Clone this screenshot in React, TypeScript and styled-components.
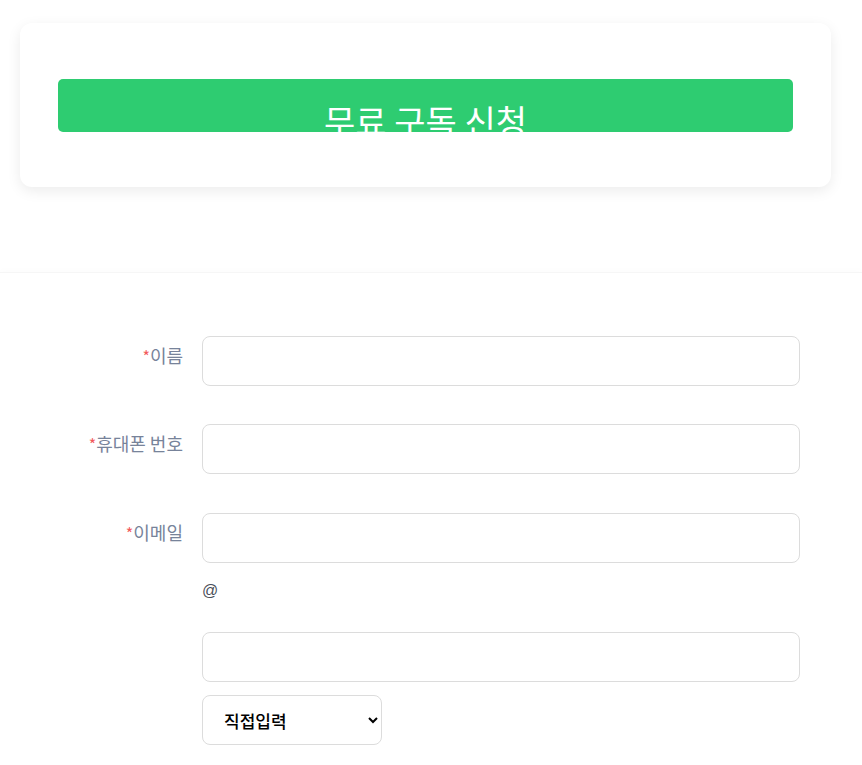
import React from "react";
import styled, { createGlobalStyle } from "styled-components";

const GlobalStyle = createGlobalStyle`
  html, body {
    margin: 0;
    padding: 0;
    background: #ffffff;
  }
  body {
    font-family: "Noto Sans CJK KR", "Noto Sans", sans-serif;
  }
  * {
    box-sizing: border-box;
  }
`;

const Page = styled.div`
  width: 862px;
  min-height: 765px;
  background: #fff;
`;

const TopArea = styled.section`
  padding: 23px 31px 85px 20px;
`;

const Card = styled.div`
  background: #fff;
  border-radius: 12px;
  box-shadow: 0 4px 14px rgba(0, 0, 0, 0.08);
  padding: 56px 38px 55px;
`;

const SubscribeButton = styled.button`
  display: block;
  width: 100%;
  height: 53px;
  border: none;
  border-radius: 5px;
  background: #2ecc71;
  color: #fff;
  font-family: "Noto Sans CJK KR", sans-serif;
  font-size: 34px;
  line-height: 34px;
  padding: 25px 0 0;
  overflow: hidden;
  text-align: center;
  cursor: pointer;
`;

const FormArea = styled.section`
  border-top: 1px solid #f6f6f6;
  box-shadow: 0 -3px 6px rgba(0, 0, 0, 0.012);
  padding-top: 63px;
`;

const Row = styled.div<{ $gap?: number }>`
  display: grid;
  grid-template-columns: 183px 598px;
  column-gap: 19px;
  margin-bottom: ${(p) => p.$gap ?? 38}px;
`;

const Label = styled.label`
  text-align: right;
  font-size: 18px;
  line-height: 24px;
  padding-top: 7px;
  color: #77839a;
  white-space: nowrap;
`;

const Star = styled.span`
  color: #f25a5a;
  font-size: 16px;
`;

const Field = styled.div`
  display: flex;
  flex-direction: column;
  align-items: flex-start;
`;

const TextInput = styled.input`
  width: 598px;
  height: 50px;
  border: 1px solid #dcdcdc;
  border-radius: 8px;
  padding: 0 16px;
  font-size: 16px;
  font-family: "Noto Sans CJK KR", sans-serif;
  outline: none;
  background: #fff;
`;

const At = styled.span`
  font-family: "Liberation Sans", "Noto Sans", sans-serif;
  font-size: 16px;
  color: #4a4f5a;
  line-height: 20px;
  margin: 18px 0 31px;
`;

const DomainSelect = styled.select`
  width: 180px;
  height: 50px;
  margin-top: 13px;
  border: 1px solid #dcdcdc;
  border-radius: 8px;
  padding: 0 8px 0 17px;
  font-size: 17px;
  font-weight: 500;
  font-family: "Noto Sans CJK KR", sans-serif;
  color: #000;
  background: #fff;
  outline: none;
`;

export default function App() {
  return (
    <Page>
      <GlobalStyle />
      <TopArea>
        <Card>
          <SubscribeButton type="button">무료 구독 신청</SubscribeButton>
        </Card>
      </TopArea>
      <FormArea>
        <Row>
          <Label>
            <Star>*</Star>이름
          </Label>
          <Field>
            <TextInput type="text" />
          </Field>
        </Row>
        <Row $gap={39}>
          <Label>
            <Star>*</Star>휴대폰 번호
          </Label>
          <Field>
            <TextInput type="tel" />
          </Field>
        </Row>
        <Row $gap={0}>
          <Label>
            <Star>*</Star>이메일
          </Label>
          <Field>
            <TextInput type="text" />
            <At>@</At>
            <TextInput type="text" />
            <DomainSelect defaultValue="direct">
              <option value="direct">직접입력</option>
              <option value="naver.com">naver.com</option>
              <option value="gmail.com">gmail.com</option>
            </DomainSelect>
          </Field>
        </Row>
      </FormArea>
    </Page>
  );
}
